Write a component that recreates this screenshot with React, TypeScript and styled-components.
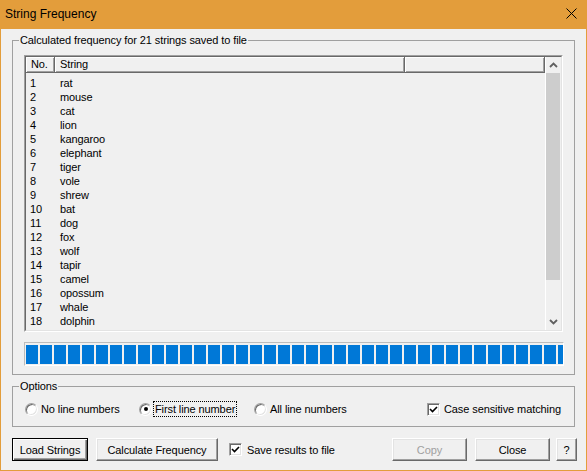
import React from 'react';
import styled, { createGlobalStyle } from 'styled-components';

const ORANGE = '#e39d3b';

const GlobalStyle = createGlobalStyle`
  html, body { margin: 0; padding: 0; background: #f0f0f0; }
  body {
    font-family: "Liberation Sans", Arial, sans-serif;
    font-size: 11px;
    letter-spacing: -0.1px;
    color: #000;
  }
  * { box-sizing: border-box; }
`;

const Window = styled.div`
  width: 587px;
  height: 471px;
  border: 1px solid ${ORANGE};
  border-top: none;
  background: #f0f0f0;
  display: flex;
  flex-direction: column;
`;

const TitleBar = styled.div`
  height: 29px;
  flex: 0 0 29px;
  background: ${ORANGE};
  display: flex;
  align-items: center;
  justify-content: space-between;
  padding: 0 9px 2px 4px;
  font-size: 12px;
  letter-spacing: 0;
`;

const Content = styled.div`
  padding: 4px 11px 8px;
  display: flex;
  flex-direction: column;
`;

const GroupBox = styled.fieldset<{ $mt?: number }>`
  margin: ${(p) => p.$mt ?? 0}px 0 0 0;
  padding: 0;
  border: 1px solid #a0a0a0;
  min-width: 0;
`;

const Legend = styled.legend`
  margin-left: 6px;
  padding: 0 1px;
  line-height: 14px;
  font-size: 11px;
`;

const GroupBody = styled.div<{ $pad: string }>`
  padding: ${(p) => p.$pad};
`;

const ListBox = styled.div`
  width: 539px;
  height: 277px;
  border: 1px solid;
  border-color: #a0a0a0 #fff #fff #a0a0a0;
`;

const ListInner = styled.div`
  height: 100%;
  border: 1px solid;
  border-color: #696969 #e3e3e3 #e3e3e3 #696969;
  display: grid;
  grid-template-columns: 1fr 16px;
  overflow: hidden;
  background: #f0f0f0;
`;

const ListMain = styled.div`
  display: flex;
  flex-direction: column;
  overflow: hidden;
  min-width: 0;
`;

const Header = styled.div`
  display: flex;
  height: 16px;
  flex: 0 0 16px;
`;

const HeaderCell = styled.div<{ $w?: number }>`
  ${(p) => (p.$w ? `width: ${p.$w}px; flex: 0 0 ${p.$w}px;` : 'flex: 1;')}
  height: 16px;
  border-right: 1px solid #696969;
  border-bottom: 1px solid #696969;
  box-shadow: inset 1px 1px #fff, inset -1px -1px #a0a0a0;
  padding-left: 5px;
  line-height: 15px;
  white-space: nowrap;
`;

const Rows = styled.div`
  padding-top: 3px;
  overflow: hidden;
`;

const Row = styled.div`
  display: flex;
  line-height: 14px;
  height: 14px;
  white-space: nowrap;
`;

const NumCell = styled.div`
  width: 34px;
  flex: 0 0 34px;
  padding-left: 4px;
`;

const StrCell = styled.div`
  flex: 1;
`;

const ScrollCol = styled.div`
  display: flex;
  flex-direction: column;
  background: #f0f0f0;
  border-left: 1px solid #fff;
`;

const ArrowBtn = styled.div`
  height: 16px;
  flex: 0 0 16px;
  display: flex;
  align-items: center;
  justify-content: center;
`;

const Track = styled.div`
  flex: 1;
  padding: 0 1px 0 0;
`;

const Thumb = styled.div`
  height: 207px;
  background: #cdcdcd;
`;

const Progress = styled.div`
  width: 540px;
  height: 24px;
  margin-top: 10px;
  border: 1px solid;
  border-color: #bcbcbc #fff #fff #bcbcbc;
  padding: 2px 1px 1px;
  display: flex;
  gap: 2px;
  overflow: hidden;
  background: #f0f0f0;
`;

const Block = styled.div`
  flex: 0 0 12px;
  height: 100%;
  background: #0078d7;
`;

const OptionsRow = styled.div`
  display: grid;
  grid-template-columns: 114px 115px 173px 1fr;
  height: 16px;
  align-items: center;
`;

const Option = styled.div<{ $gap: number; $ml?: number }>`
  display: flex;
  align-items: center;
  gap: ${(p) => p.$gap}px;
  margin-left: ${(p) => p.$ml ?? 0}px;
  white-space: nowrap;
`;

const Radio = styled.span<{ $checked?: boolean }>`
  width: 13px;
  height: 13px;
  flex: 0 0 13px;
  border-radius: 50%;
  border: 1px solid;
  border-color: #a0a0a0 #fff #fff #a0a0a0;
  background: #fff;
  box-shadow: inset 1px 1px #696969, inset -1px -1px #e3e3e3;
  display: flex;
  align-items: center;
  justify-content: center;
  &::after {
    content: '';
    display: ${(p) => (p.$checked ? 'block' : 'none')};
    width: 4px;
    height: 4px;
    border-radius: 50%;
    background: #000;
  }
`;

const CheckBox = styled.span`
  width: 13px;
  height: 13px;
  flex: 0 0 13px;
  border: 1px solid;
  border-color: #a0a0a0 #fff #fff #a0a0a0;
  background: #fff;
  box-shadow: inset 1px 1px #696969, inset -1px -1px #e3e3e3;
  display: flex;
  align-items: center;
  justify-content: center;
`;

const OptLabel = styled.span<{ $focus?: boolean }>`
  padding: 0 1px;
  border: 1px dotted ${(p) => (p.$focus ? '#000' : 'transparent')};
  line-height: 14px;
`;

const ButtonRow = styled.div`
  display: flex;
  align-items: center;
  margin-top: 11px;
  margin-right: -2px;
  height: 23px;
`;

const Button = styled.button<{ $w: number; $ml?: number; $default?: boolean; $auto?: boolean }>`
  width: ${(p) => p.$w}px;
  height: 23px;
  margin: 0 0 0 ${(p) => (p.$auto ? 'auto' : `${p.$ml ?? 0}px`)};
  padding: 0;
  font-family: "Liberation Sans", Arial, sans-serif;
  font-size: 11px;
  letter-spacing: -0.1px;
  color: #000;
  background: #f0f0f0;
  border: 1px solid;
  ${(p) =>
    p.$default
      ? `border-color: #000; box-shadow: inset 1px 1px #fff, inset -1px -1px #696969, inset -2px -2px #a0a0a0;`
      : `border-color: #fff #696969 #696969 #fff; box-shadow: inset -1px -1px #a0a0a0, inset 1px 1px #e3e3e3;`}
  &:disabled {
    color: #a0a0a0;
  }
`;

const items = [
  'rat', 'mouse', 'cat', 'lion', 'kangaroo', 'elephant', 'tiger', 'vole', 'shrew', 'bat',
  'dog', 'fox', 'wolf', 'tapir', 'camel', 'opossum', 'whale', 'dolphin', 'hedgehog',
];

const CheckMark = () => (
  <svg width="9" height="9" viewBox="0 0 9 9">
    <path d="M1 4 L3.5 6.5 L8 2" fill="none" stroke="#000" strokeWidth="1.6" />
  </svg>
);

const Chevron = ({ up }: { up?: boolean }) => (
  <svg width="9" height="6" viewBox="0 0 9 6">
    <path
      d={up ? 'M1 5 L4.5 1.5 L8 5' : 'M1 1 L4.5 4.5 L8 1'}
      fill="none"
      stroke="#606060"
      strokeWidth="1.8"
    />
  </svg>
);

export default function App() {
  return (
    <>
      <GlobalStyle />
      <Window>
        <TitleBar>
          <span>String Frequency</span>
          <svg width="11" height="11" viewBox="0 0 11 11">
            <path d="M0.5 0.5 L10.5 10.5 M10.5 0.5 L0.5 10.5" stroke="#000" strokeWidth="1" />
          </svg>
        </TitleBar>
        <Content>
          <GroupBox>
            <Legend>Calculated frequency for 21 strings saved to file</Legend>
            <GroupBody $pad="8px 10px 8px 11px">
              <ListBox>
                <ListInner>
                  <ListMain>
                    <Header>
                      <HeaderCell $w={29}>No.</HeaderCell>
                      <HeaderCell $w={350}>String</HeaderCell>
                      <HeaderCell />
                    </Header>
                    <Rows>
                      {items.map((s, i) => (
                        <Row key={s}>
                          <NumCell>{i + 1}</NumCell>
                          <StrCell>{s}</StrCell>
                        </Row>
                      ))}
                    </Rows>
                  </ListMain>
                  <ScrollCol>
                    <ArrowBtn>
                      <Chevron up />
                    </ArrowBtn>
                    <Track>
                      <Thumb />
                    </Track>
                    <ArrowBtn>
                      <Chevron />
                    </ArrowBtn>
                  </ScrollCol>
                </ListInner>
              </ListBox>
              <Progress>
                {Array.from({ length: 40 }).map((_, i) => (
                  <Block key={i} />
                ))}
              </Progress>
            </GroupBody>
          </GroupBox>
          <GroupBox $mt={4}>
            <Legend>Options</Legend>
            <GroupBody $pad="8px 0 9px 12px">
              <OptionsRow>
                <Option $gap={1}>
                  <Radio />
                  <OptLabel>No line numbers</OptLabel>
                </Option>
                <Option $gap={1}>
                  <Radio $checked />
                  <OptLabel $focus>First line number</OptLabel>
                </Option>
                <Option $gap={1}>
                  <Radio />
                  <OptLabel>All line numbers</OptLabel>
                </Option>
                <Option $gap={2}>
                  <CheckBox>
                    <CheckMark />
                  </CheckBox>
                  <OptLabel>Case sensitive matching</OptLabel>
                </Option>
              </OptionsRow>
            </GroupBody>
          </GroupBox>
          <ButtonRow>
            <Button $w={76} $default>Load Strings</Button>
            <Button $w={122} $ml={8}>Calculate Frequency</Button>
            <Option $gap={3} $ml={11}>
              <CheckBox>
                <CheckMark />
              </CheckBox>
              <OptLabel>Save results to file</OptLabel>
            </Option>
            <Button $w={75} $auto disabled>Copy</Button>
            <Button $w={75} $ml={8}>Close</Button>
            <Button $w={21} $ml={6}>?</Button>
          </ButtonRow>
        </Content>
      </Window>
    </>
  );
}
